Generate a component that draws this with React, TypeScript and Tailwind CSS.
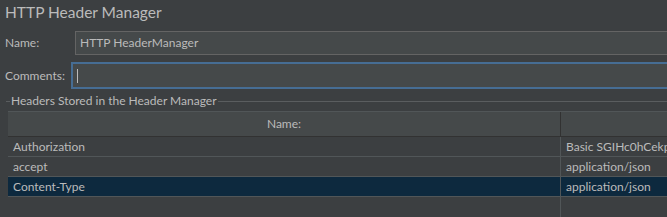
const rows = [
  { name: 'Authorization', value: 'Basic SGIHc0hCekpvMjZwOkNsaWVudFNlY3JldA==' },
  { name: 'accept', value: 'application/json' },
  { name: 'Content-Type', value: 'application/json', selected: true },
]

export default function App() {
  return (
    <div
      className="w-[667px] h-[217px] overflow-hidden bg-[#3c3f41] text-[#bbbbbb] text-[12px]"
      style={{ fontFamily: 'Lato, "Noto Sans", sans-serif' }}
    >
      {/* Title */}
      <div className="h-[31px] pl-[5px] pt-[2px] text-[15.5px] leading-[20px]">HTTP Header Manager</div>

      {/* Name */}
      <div className="flex items-center h-[24px]">
        <div className="w-[75px] pl-[5px]">Name:</div>
        <div className="flex-1 h-[24px] flex items-center pl-[4px] bg-[#45494a] border border-r-0 border-[#646464] whitespace-nowrap">
          HTTP HeaderManager
        </div>
      </div>

      {/* Comments */}
      <div className="flex items-center h-[27px] mt-[7px]">
        <div className="w-[71px] pl-[5px]">Comments:</div>
        <div className="flex-1 h-[27px] flex items-center pl-[4px] bg-[#45494a] border-2 border-r-0 border-[#466d94]">
          <div className="w-px h-[14px] bg-[#bbbbbb]" />
        </div>
      </div>

      {/* Group title */}
      <div className="flex items-center h-[12px] mt-[6px]">
        <div className="w-[4px] ml-[6px] h-px bg-[#5a5d5f]" />
        <div className="px-[1px] whitespace-nowrap leading-[12px]">Headers Stored in the Header Manager</div>
        <div className="flex-1 h-px bg-[#5a5d5f]" />
      </div>

      {/* Table */}
      <div className="ml-[8px] mt-[4px] border-t border-[#515658]">
        <div className="flex h-[25px] bg-[#45494a] border-b border-[#323232]">
          <div className="w-[553px] flex items-center justify-center border-r border-[#323232]">Name:</div>
          <div className="flex-1" />
        </div>
        {rows.map((r) => (
          <div
            key={r.name}
            className={`flex h-[20px] border-b border-[#515658] whitespace-nowrap ${r.selected ? 'bg-[#0d293e]' : ''}`}
          >
            <div className="w-[553px] flex items-center pl-[5px] border-r border-[#515658]">{r.name}</div>
            <div className="flex-1 flex items-center pl-[5px] overflow-hidden">{r.value}</div>
          </div>
        ))}
        <div className="flex h-[40px]">
          <div className="w-[553px] border-r border-[#515658]" />
        </div>
      </div>
    </div>
  )
}
